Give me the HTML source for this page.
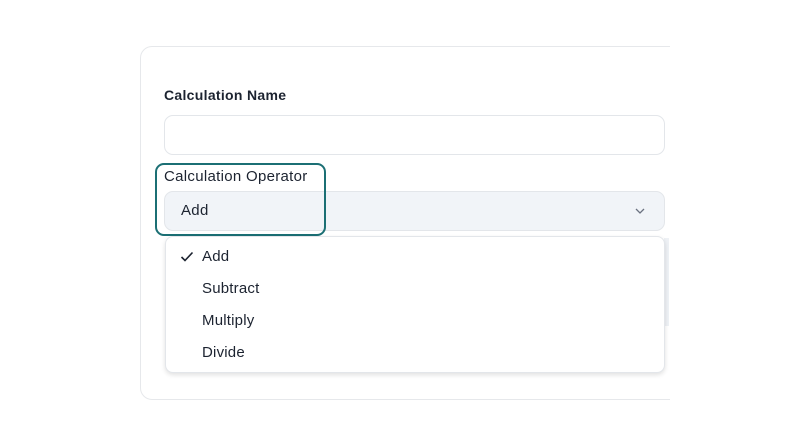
<!DOCTYPE html>
<html><head><style>
body{margin:0;width:801px;height:441px;background:#fff;font-family:"Liberation Sans",sans-serif;position:relative;overflow:hidden;color:#1c2330}
.card{position:absolute;left:140px;top:46px;width:540px;height:352px;border:1px solid #e6e8eb;border-radius:12px}
.clip{position:absolute;left:670px;top:0;width:131px;height:441px;background:#fff}
.lbl{position:absolute;left:164px;font-size:15px;letter-spacing:0.3px}
.inp{position:absolute;left:164px;width:499px;height:38px;border:1px solid #e3e6ea;border-radius:9px}
.hl{position:absolute;left:155px;top:163px;width:167px;height:69px;border:2.5px solid #1b6f74;border-radius:9px}
.dd{position:absolute;left:165px;top:236px;width:498px;height:135px;background:#fff;border:1px solid #e3e6ea;border-radius:8px;box-shadow:0 2px 5px rgba(0,0,0,.12)}
.it{position:absolute;left:36px;font-size:15px;letter-spacing:0.2px}
</style></head><body>
<div class="card"></div>
<div style="position:absolute;left:664px;top:238px;width:5px;height:88px;background:#eef1f5"></div>
<div class="clip"></div>
<div class="lbl" style="top:87px;font-weight:bold;font-size:14px">Calculation Name</div>
<div class="inp" style="top:115px;background:#fff"></div>
<div class="lbl" style="top:168px">Calculation Operator</div>
<div class="inp" style="top:191px;background:#f1f4f8"></div>
<div style="position:absolute;left:181px;top:202px;font-size:15px;letter-spacing:0.3px">Add</div>
<svg style="position:absolute;left:634px;top:207px" width="12" height="8" viewBox="0 0 12 8"><path d="M2 2l4 4 4-4" fill="none" stroke="#6b7280" stroke-width="1.3"/></svg>
<div class="hl"></div>
<div class="dd">
<svg style="position:absolute;left:14px;top:14px" width="14" height="12" viewBox="0 0 14 12"><path d="M1.5 6l3.5 3.5 7.5-8" fill="none" stroke="#1c2330" stroke-width="1.6"/></svg>
<div class="it" style="top:11px">Add</div>
<div class="it" style="top:43px">Subtract</div>
<div class="it" style="top:75px">Multiply</div>
<div class="it" style="top:107px">Divide</div>
</div>
</body></html>
